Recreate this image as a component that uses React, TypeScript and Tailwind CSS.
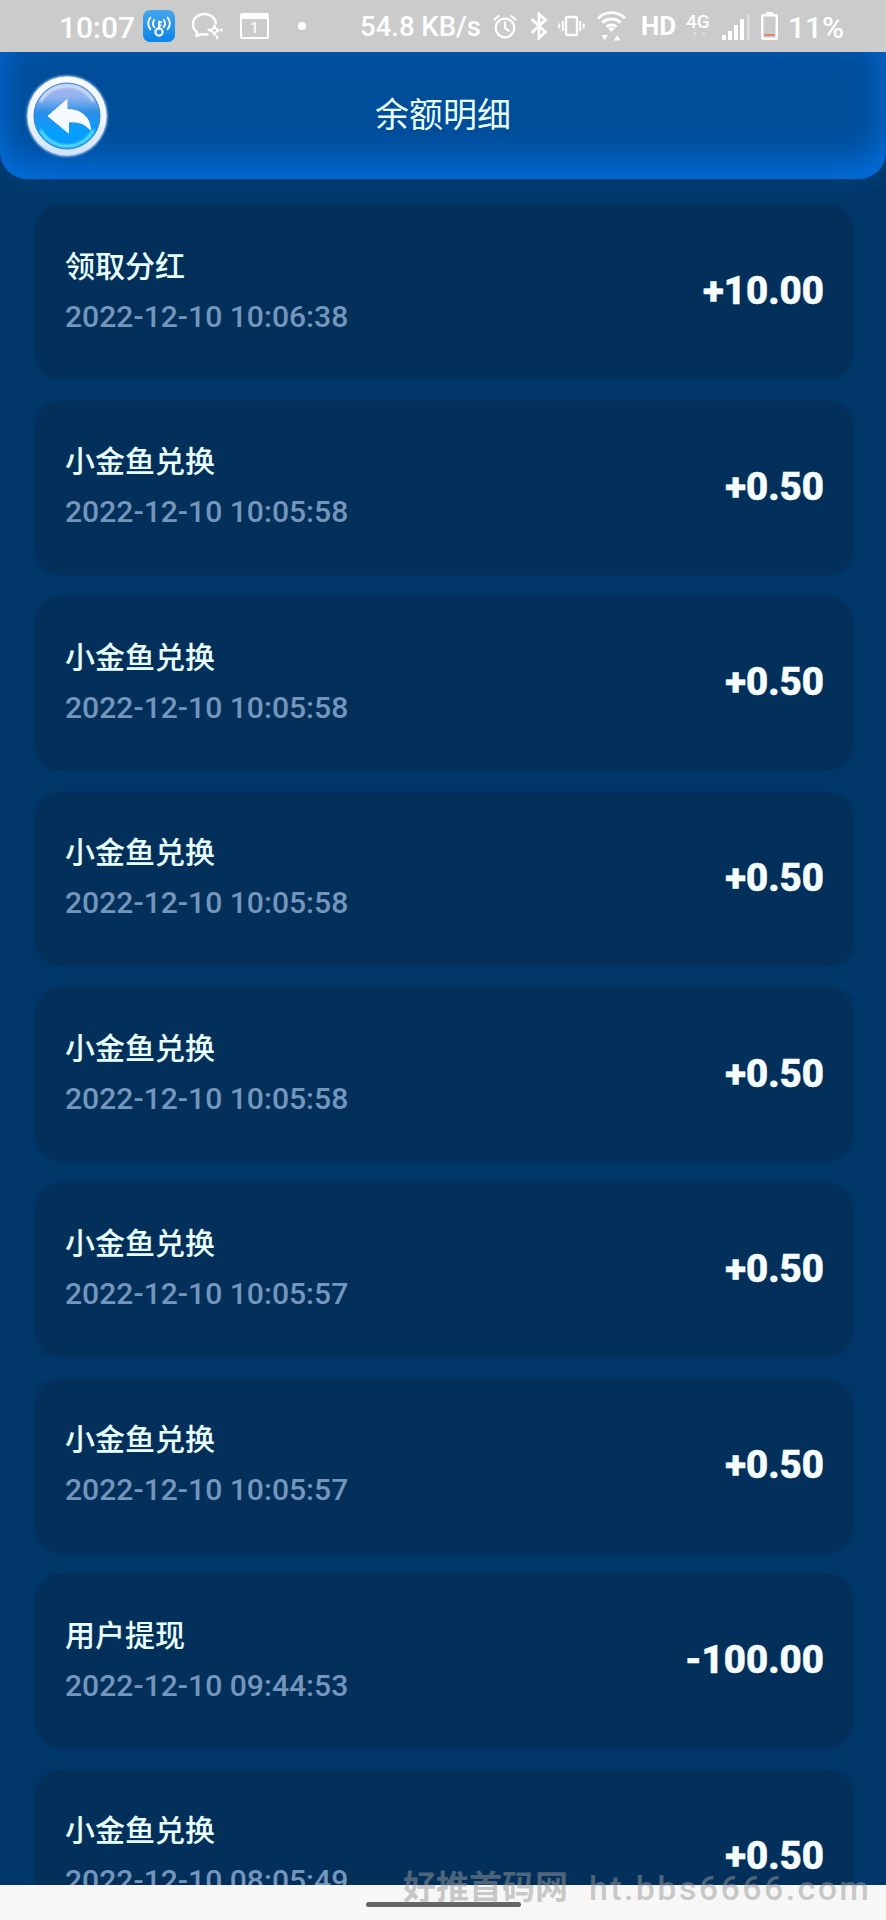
import React from "react";

type Entry = { title: string; time: string; amount: string };

const entries: Entry[] = [
  { title: "领取分红", time: "2022-12-10 10:06:38", amount: "+10.00" },
  { title: "小金鱼兑换", time: "2022-12-10 10:05:58", amount: "+0.50" },
  { title: "小金鱼兑换", time: "2022-12-10 10:05:58", amount: "+0.50" },
  { title: "小金鱼兑换", time: "2022-12-10 10:05:58", amount: "+0.50" },
  { title: "小金鱼兑换", time: "2022-12-10 10:05:58", amount: "+0.50" },
  { title: "小金鱼兑换", time: "2022-12-10 10:05:57", amount: "+0.50" },
  { title: "小金鱼兑换", time: "2022-12-10 10:05:57", amount: "+0.50" },
  { title: "用户提现", time: "2022-12-10 09:44:53", amount: "-100.00" },
  { title: "小金鱼兑换", time: "2022-12-10 08:05:49", amount: "+0.50" },
];

function HotspotIcon() {
  return (
    <svg className="ml-[9px] size-8 shrink-0" viewBox="0 0 32 32" fill="none">
      <defs>
        <linearGradient id="hotspot" x1="0" y1="0" x2="0" y2="1">
          <stop offset="0" stopColor="#45a6ee" />
          <stop offset="1" stopColor="#0c84ea" />
        </linearGradient>
      </defs>
      <rect width="32" height="32" rx="7" fill="url(#hotspot)" />
      <g stroke="#fff" strokeWidth="1.9" strokeLinecap="round">
        <circle cx="16" cy="22" r="3.6" strokeWidth="2.2" />
        <path d="M16 18.400V11.500M16 12.200h2.200M16 15.400h1.800" />
        <path d="M11.300 9.800c-1.600 2.200-1.600 5.200 0 7.400M20.700 9.800c1.600 2.200 1.600 5.200 0 7.400" />
        <path d="M7.400 7.600c-2.900 3.400-2.900 8.200 0 11.600M24.600 7.600c2.900 3.400 2.900 8.200 0 11.600" />
      </g>
    </svg>
  );
}

function ChatIcon() {
  return (
    <svg className="ml-4 h-[28px] w-8 shrink-0" viewBox="0 0 32 28" fill="none" stroke="#fff" strokeWidth="2.4" strokeLinejoin="round" strokeLinecap="round">
      <path d="M24.8 11.4C24.2 5.6 19.400 2 13.400 2 6.900 2 2 6.500 2 12.200c0 3.500 1.800 6.400 4.200 8.200l-.8 3.800 5-2.100c1.700.4 3.800.5 6 .1" />
      <path d="M23.400 13.500c.6 2.700 1.500 3.900 4.400 4.800-2.900.9-3.800 2.100-4.400 4.800-.6-2.700-1.500-3.900-4.400-4.800 2.900-.9 3.800-2.100 4.400-4.800Z" strokeWidth="1.900" />
      <path d="M26 24.500v1.500M30.500 17.800v.4M17.500 17.500l.5.500" />
    </svg>
  );
}

function CalendarIcon() {
  return (
    <div className="ml-[17px] flex h-[26px] w-[29px] shrink-0 items-center justify-center rounded-[2px] border-2 border-t-[6px] border-white text-[14px] font-medium leading-none text-white">
      1
    </div>
  );
}

function AlarmIcon() {
  return (
    <svg className="ml-[14px] h-[25px] w-6 shrink-0" viewBox="0 0 24 25" fill="none" stroke="#fff" strokeWidth="2.300" strokeLinecap="round">
      <circle cx="12" cy="14" r="9.300" />
      <path d="M12 8.500V14l3.500 2.500M1.500 5.500 5.500 2M22.500 5.500 18.500 2" />
    </svg>
  );
}

function BluetoothIcon() {
  return (
    <svg className="ml-[13px] h-[28px] w-[18px] shrink-0" viewBox="0 0 18 28" fill="none" stroke="#fff" strokeWidth="2.800">
      <path d="M1.500 7 15.500 20 9 26V2l6.500 6L1.500 21" />
    </svg>
  );
}

function VibrateIcon() {
  return (
    <svg className="ml-[10px] h-[22px] w-[27px] shrink-0" viewBox="0 0 27 22" fill="none" stroke="#fff" strokeWidth="2.300">
      <rect x="8" y="2" width="11" height="18" rx="1" />
      <path d="M4.800 6v10M1.200 8.500v5M22.200 6v10M25.800 8.500v5" strokeWidth="1.900" />
    </svg>
  );
}

function WifiIcon() {
  return (
    <svg className="ml-[11px] h-[32px] w-[31px] shrink-0" viewBox="0 0 31 32" fill="none" stroke="#fff" strokeWidth="2.900">
      <path d="M2 8.500C9.500.7 21.500.7 29 8.500M6.300 12.800c5.200-5 13.200-5 18.400 0M10.500 16.800c2.900-2.500 7.100-2.500 10 0" />
      <path d="M12.200 18.500c2-1.600 4.600-1.600 6.600 0L15.500 22ZM5.500 25h6.500l-3.250 5.500ZM18 30.500h6.500L21.250 25Z" fill="#fff" stroke="none" />
    </svg>
  );
}

function SignalIcon() {
  return (
    <svg className="ml-[10px] mt-[2px] h-[28px] w-[30px] shrink-0" viewBox="0 0 30 28" fill="#fff">
      <path d="M1 22h4v5H1zM7 18h4v9H7zM13 12h4v15h-4zM19 6h4v21h-4z" />
      <path d="M26 1h3v26h-3z" opacity=".35" />
    </svg>
  );
}

function BatteryIcon() {
  return (
    <svg className="ml-[10px] h-[28px] w-[17px] shrink-0" viewBox="0 0 17 28" fill="none">
      <path d="M5 0h7v3H5z" fill="#fff" />
      <rect x="1.250" y="3.250" width="14.500" height="23.500" rx="1" stroke="#fff" strokeWidth="2.400" />
      <path d="M3.500 22h10v2h-10z" fill="#e8875f" />
    </svg>
  );
}

function StatusBar() {
  return (
    <div className="z-20 flex h-[52px] shrink-0 items-center bg-[#cbcbcb] pl-[59px] text-[28px] font-medium text-white">
      <span className="mt-[3px] w-[75px] text-[30px]">10:07</span>
      <HotspotIcon />
      <ChatIcon />
      <CalendarIcon />
      <span className="ml-[29px] size-2 rounded-full bg-white" />
      <span className="ml-[54px] mt-[2px] w-[119px] whitespace-nowrap text-[27.5px]">54.8 KB/s</span>
      <AlarmIcon />
      <BluetoothIcon />
      <VibrateIcon />
      <WifiIcon />
      <span className="ml-[14px] w-[35px] text-[26px] font-bold">HD</span>
      <span className="-mt-[6px] ml-[10px] flex w-[25px] flex-col text-[19px] leading-[22px]">
        4G
        <span className="-mt-[1px] flex justify-center gap-[6px]">
          <span className="size-[3px] rounded-full bg-white/40" />
          <span className="size-[3px] rounded-full bg-white/40" />
        </span>
      </span>
      <SignalIcon />
      <BatteryIcon />
      <span className="ml-[10px] mt-[3px] text-[30px]">11%</span>
    </div>
  );
}

function BackIcon() {
  return (
    <svg className="size-[86px]" viewBox="0 0 86 86" fill="none">
      <defs>
        <linearGradient id="orb" x1="0" y1="0" x2="0" y2="1">
          <stop offset="0" stopColor="#b0b8ee" />
          <stop offset=".22" stopColor="#8fb2ee" />
          <stop offset=".45" stopColor="#2a8fe8" />
          <stop offset=".75" stopColor="#05a0ff" />
          <stop offset="1" stopColor="#0799f5" />
        </linearGradient>
        <linearGradient id="rim" x1="0" y1="0" x2="0" y2="1">
          <stop offset="0" stopColor="#fafcff" />
          <stop offset=".5" stopColor="#f0f6ff" />
          <stop offset="1" stopColor="#d0e2ff" />
        </linearGradient>
        <filter id="soft" x="-20%" y="-20%" width="140%" height="140%">
          <feGaussianBlur stdDeviation=".8" />
        </filter>
      </defs>
      <circle cx="43" cy="43" r="40.500" fill="#a9cdf5" filter="url(#soft)" />
      <circle cx="43" cy="43" r="39.500" fill="url(#rim)" />
      <circle cx="43" cy="43" r="33" fill="url(#orb)" stroke="#2a7fd0" strokeWidth="1" />
      <g filter="url(#soft)" strokeLinecap="round">
        <path d="M17 28A30 30 0 0 1 69 28" stroke="#d7edff" strokeWidth="2.200" />
        <path d="M17 58A30 30 0 0 0 69 58" stroke="#7af2ff" strokeWidth="2.400" />
      </g>
      <path d="M24 43 43 26.500V36.500C57 36.500 66 43.500 66.500 57 60 49.500 53 48.500 44.500 49V60Z" fill="#f4faff" stroke="#f4faff" strokeWidth="1" strokeLinejoin="round" />
    </svg>
  );
}

function Header() {
  return (
    <header className="z-10 grid h-[127px] shrink-0 grid-cols-[1fr_auto_1fr] items-center rounded-b-[27px] bg-[#004d99] px-[24px] shadow-[inset_0_-16px_36px_#0070e0,0_2px_28px_#004b9080]">
      <button aria-label="返回" className="w-fit">
        <BackIcon />
      </button>
      <h1 className="text-[34px] text-[#e9ffff]">余额明细</h1>
    </header>
  );
}

function Card({ title, time, amount }: Entry) {
  return (
    <li className="flex h-[174px] shrink-0 items-center justify-between rounded-[26px] bg-[#03305b] pl-[30px] pr-[29px] shadow-[0_0_2px_#03305b]">
      <div className="-mt-px flex flex-col">
        <span className="text-[30px] font-medium leading-[50px] text-[#e9ffff]">{title}</span>
        <span className="text-[30.1px] font-medium leading-[50px] text-[#7496bb]">{time}</span>
      </div>
      <span className="-mt-[2px] text-[38.500px] font-extrabold text-[#f5fdff] [-webkit-text-stroke:0.6px_#f5fdff]">{amount}</span>
    </li>
  );
}

export default function App() {
  return (
    <div className="relative flex h-[1920px] w-[886px] flex-col overflow-hidden bg-[#003769] font-['Roboto','Noto_Sans_CJK_SC',sans-serif]">
      <StatusBar />
      <Header />
      <ul className="flex min-h-0 flex-1 flex-col gap-[21.6px] overflow-hidden pl-[35px] pr-[33px] pt-[26px]">
        {entries.map((entry, i) => (
          <Card key={i} {...entry} />
        ))}
      </ul>
      <footer className="flex h-[35px] shrink-0 justify-center bg-[#f7f7f7] pt-[17px]">
        <div className="h-[5px] w-[155px] rounded-full bg-[#666]" />
      </footer>
      <div className="absolute bottom-[14px] left-[403px] flex h-[36px] items-center whitespace-nowrap text-[#989898]/50">
        <span className="w-[186px] text-[33px] font-bold">好推首码网</span>
        <span className="text-[34px] font-medium tracking-[2.400px]">ht.bbs6666.com</span>
      </div>
    </div>
  );
}
